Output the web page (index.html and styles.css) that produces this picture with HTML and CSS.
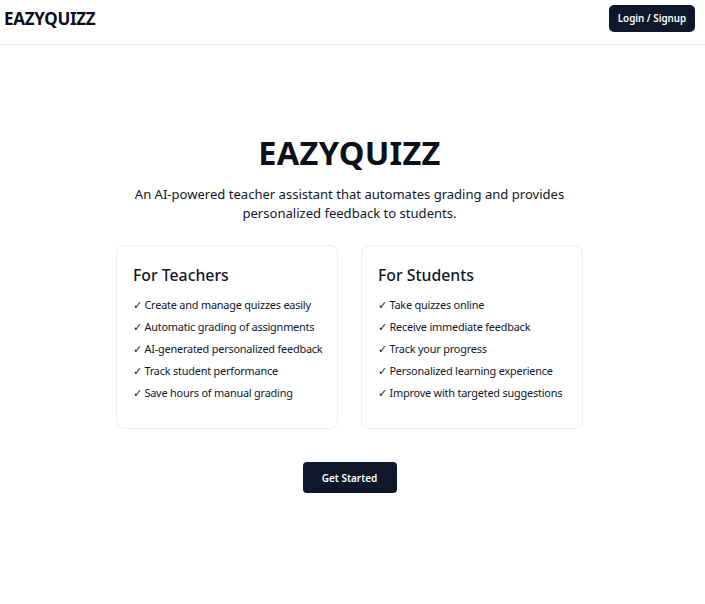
FILE: index.html
```html
<!DOCTYPE html>
<html>
<head>
<meta charset="utf-8">
<link rel="stylesheet" href="styles.css">
</head>
<body>
<header class="topbar">
  <div class="logo">EAZYQUIZZ</div>
  <button class="btn btn-small">Login / Signup</button>
</header>
<main class="hero">
  <h1 class="title">EAZYQUIZZ</h1>
  <p class="subtitle">An AI-powered teacher assistant that automates grading and provides personalized feedback to students.</p>
  <div class="cards">
    <div class="card">
      <h2 class="card-title">For Teachers</h2>
      <ul class="list">
        <li>✓ Create and manage quizzes easily</li>
        <li>✓ Automatic grading of assignments</li>
        <li>✓ AI-generated personalized feedback</li>
        <li>✓ Track student performance</li>
        <li>✓ Save hours of manual grading</li>
      </ul>
    </div>
    <div class="card">
      <h2 class="card-title">For Students</h2>
      <ul class="list">
        <li>✓ Take quizzes online</li>
        <li>✓ Receive immediate feedback</li>
        <li>✓ Track your progress</li>
        <li>✓ Personalized learning experience</li>
        <li>✓ Improve with targeted suggestions</li>
      </ul>
    </div>
  </div>
  <button class="btn btn-main">Get Started</button>
</main>
</body>
</html>
```
FILE: styles.css
```css
* { box-sizing: border-box; }
body {
  margin: 0;
  font-family: "Noto Sans", "Open Sans", sans-serif;
  color: #0f172a;
  background: #fff;
}
.topbar {
  height: 45px;
  display: flex;
  justify-content: space-between;
  align-items: flex-start;
  padding: 5px 10px 0 4px;
  border-bottom: 1px solid #eef0f3;
}
.logo {
  font-size: 17px;
  font-weight: 700;
  letter-spacing: -0.3px;
  line-height: 28px;
  color: #0b0f1a;
}
.btn {
  background: #0f172a;
  color: #fff;
  border: none;
  font-family: inherit;
  font-weight: 600;
  cursor: pointer;
}
.btn-small {
  height: 27px;
  width: 86px;
  font-size: 9.8px;
  border-radius: 5px;
  padding: 0;
}
.hero {
  display: flex;
  flex-direction: column;
  align-items: center;
  padding-top: 88px;
  padding-right: 6px;
}
.title {
  margin: 0;
  font-size: 32.5px;
  font-weight: 700;
  line-height: 40px;
  letter-spacing: 0.3px;
  color: #0b0f1a;
}
.subtitle {
  margin: 12px 0 0;
  width: 440px;
  text-align: center;
  font-size: 13.05px;
  line-height: 19px;
}
.cards {
  margin-top: 22px;
  display: grid;
  grid-template-columns: 222px 222px;
  gap: 23px;
}
.card {
  border: 1px solid #eceef2;
  border-radius: 8px;
  height: 184px;
  padding: 17px 16px;
}
.card-title {
  margin: 0;
  font-size: 15.8px;
  font-weight: 500;
  line-height: 24px;
}
.list {
  list-style: none;
  margin: 7px 0 0;
  padding: 0;
  font-size: 10.9px;
  letter-spacing: -0.2px;
}
.list li {
  line-height: 22px;
  white-space: nowrap;
}
.btn-main {
  margin-top: 33px;
  width: 94px;
  height: 31px;
  font-size: 10px;
  border-radius: 4px;
}
```
